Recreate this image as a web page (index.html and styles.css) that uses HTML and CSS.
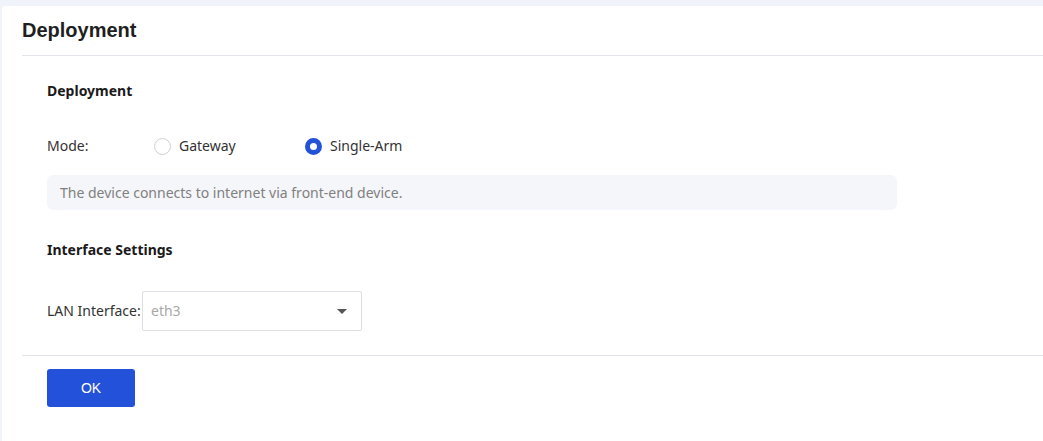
FILE: index.html
```html
<!DOCTYPE html>
<html lang="en">

<head>
    <meta charset="UTF-8">
    <meta name="viewport" content="width=device-width, initial-scale=1.0">
    <title>Deployment</title>
    <link rel="stylesheet" href="styles.css">
</head>

<body>
    <div class="page">
        <div class="panel">
            <div class="panel-head">
                <h1 class="title">Deployment</h1>
            </div>
            <div class="panel-body">
                <h2 class="sub-title">Deployment</h2>
                <div class="form-row mode-row">
                    <span class="label">Mode:</span>
                    <label class="radio">
                        <span class="radio-dot"></span>
                        <span class="radio-txt">Gateway</span>
                    </label>
                    <label class="radio checked">
                        <span class="radio-dot"></span>
                        <span class="radio-txt">Single-Arm</span>
                    </label>
                </div>
                <div class="tip">The device connects to internet via front-end device.</div>

                <h2 class="sub-title sub-title2">Interface Settings</h2>
                <div class="form-row lan-row">
                    <span class="label label-lan">LAN Interface:</span>
                    <div class="select">
                        <span class="select-txt">eth3</span>
                        <span class="arrow"></span>
                    </div>
                </div>
            </div>
            <div class="panel-foot">
                <button class="btn">OK</button>
            </div>
        </div>
    </div>
</body>

</html>
```

FILE: styles.css
```css
* {
    margin: 0;
    padding: 0;
    box-sizing: border-box;
}

html,
body {
    height: 100%;
}

body {
    background-color: #f0f3fa;
    font-family: "Noto Sans", "Liberation Sans", Arial, sans-serif;
    font-size: 14px;
    color: #333;
}

.page {
    height: 100%;
    padding: 6px 0 0 2px;
}

.panel {
    height: 100%;
    background-color: #fff;
    border-radius: 4px 0 0 0;
}

.panel-head {
    margin-left: 20px;
    height: 50px;
    border-bottom: 1px solid #e3e3ea;
    display: flex;
    align-items: center;
}

.title {
    font-family: "Liberation Sans", Arial, sans-serif;
    font-size: 20px;
    font-weight: bold;
    color: #1f1f1f;
    line-height: 24px;
    margin-top: -2px;
}

.panel-body {
    padding: 25px 0 24px 45px;
    border-bottom: 1px solid #e3e3ea;
    margin-left: 20px;
}

.panel-body .sub-title,
.panel-body .form-row,
.panel-body .tip {
    margin-left: -20px;
}

.sub-title {
    font-size: 14px;
    font-weight: bold;
    color: #1a1a1a;
    line-height: 20px;
}

.sub-title2 {
    margin-top: 30px;
}

.form-row {
    display: flex;
    align-items: center;
    line-height: 20px;
}

.mode-row {
    height: 32px;
    margin-top: 29px;
}

.label {
    width: 106px;
    color: #333;
}

.radio {
    display: flex;
    align-items: center;
    width: 151px;
    cursor: pointer;
}

.radio-dot {
    width: 17px;
    height: 17px;
    border: 1px solid #d0d0d0;
    border-radius: 50%;
    margin-left: 1px;
    margin-right: 8px;
}

.radio.checked .radio-dot {
    border: 5px solid #2352d9;
}

.radio-txt {
    color: #333;
}

.tip {
    margin-top: 13px;
    width: 850px;
    height: 35px;
    line-height: 35px;
    padding-left: 13px;
    background-color: #f5f6fa;
    border-radius: 6px;
    color: #808080;
}

.lan-row {
    margin-top: 31px;
}

.label-lan {
    width: 95px;
}

.select {
    width: 220px;
    height: 40px;
    border: 1px solid #dcdfe6;
    border-radius: 2px;
    display: flex;
    align-items: center;
    justify-content: space-between;
    padding: 0 14px 0 8px;
}

.select-txt {
    color: #a8a8a8;
}

.arrow {
    width: 0;
    height: 0;
    border-left: 5px solid transparent;
    border-right: 5px solid transparent;
    border-top: 5px solid #555;
}

.panel-foot {
    padding: 13px 0 0 45px;
}

.btn {
    width: 88px;
    height: 38px;
    border: 0;
    border-radius: 3px;
    background-color: #2351d9;
    color: #fff;
    font-family: "Liberation Sans", Arial, sans-serif;
    font-size: 14px;
    cursor: pointer;
}
```
